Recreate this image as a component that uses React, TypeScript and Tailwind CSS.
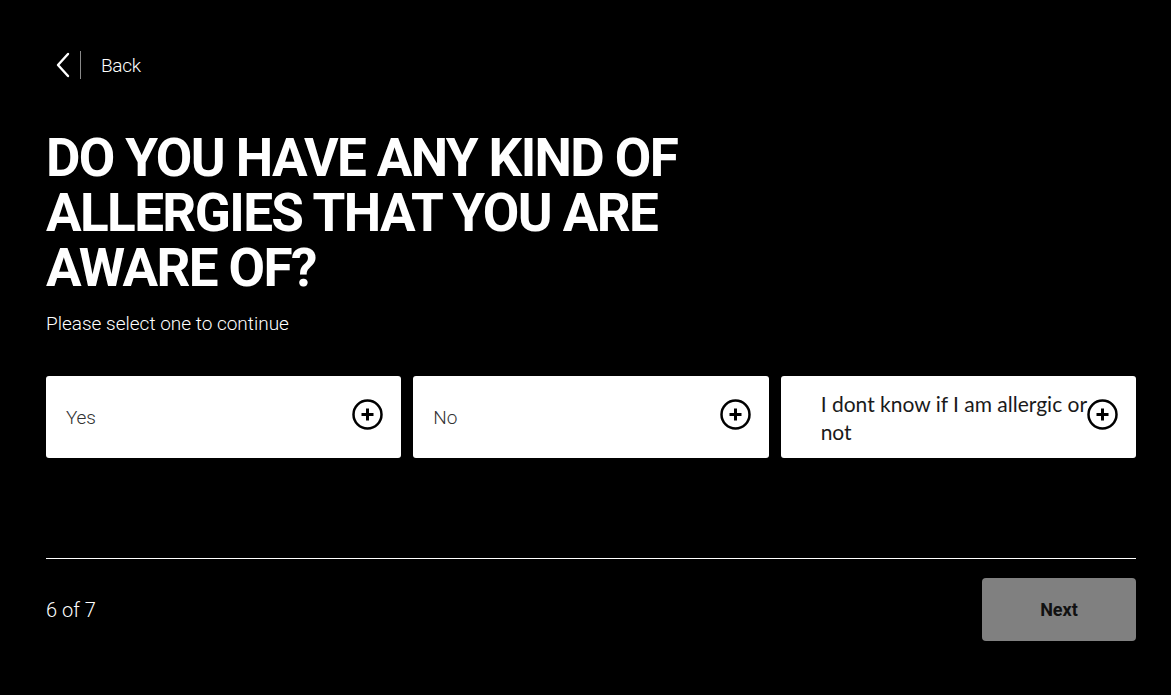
import React, { useState } from 'react';

const options = ['Yes', 'No', 'I dont know if I am allergic or not'];

const PlusCircle: React.FC<{ className?: string }> = ({ className }) => (
  <svg width="31" height="31" viewBox="0 0 31 31" fill="none" className={`shrink-0 ${className ?? ''}`}>
    <circle cx="15.5" cy="15.5" r="14" stroke="#000" strokeWidth="2.5" />
    <path d="M15.5 9.5v12M9.5 15.5h12" stroke="#000" strokeWidth="3" />
  </svg>
);

const App: React.FC = () => {
  const [selected, setSelected] = useState<number | null>(null);

  return (
    <div
      className="min-h-[695px] w-full bg-black text-white"
      style={{ fontFamily: 'Roboto, "Liberation Sans", sans-serif' }}
    >
      <div className="w-[1090px] ml-[46px] pt-[51px]">
        {/* Back */}
        <button className="flex items-center h-[28px] text-white">
          <span className="flex items-center justify-center w-[34px] h-[28px]">
            <svg width="16" height="26" viewBox="0 0 16 26" fill="none">
              <path d="M13 2 3 13l10 11" stroke="#fff" strokeWidth="2.4" strokeLinecap="round" strokeLinejoin="round" />
            </svg>
          </span>
          <span className="w-px h-[28px] bg-[#8a8a8a]" />
          <span className="ml-[20px] text-[19px] font-light leading-none tracking-[-0.3px]">Back</span>
        </button>

        {/* Question */}
        <h1 className="mt-[52px] w-[680px] text-[53px] leading-[55px] font-bold uppercase tracking-[-1.6px]">
          Do you have any kind of allergies that you are aware of?
        </h1>
        <p className="mt-[16px] text-[19px] font-light leading-[24px]">
          Please select one to continue
        </p>

        {/* Options */}
        <div className="mt-[40px] grid grid-cols-3 gap-[12px]">
          {options.map((opt, i) => (
            <button
              key={opt}
              onClick={() => setSelected(i)}
              className={`flex items-center justify-between h-[82px] rounded-[3px] bg-white text-left pr-[18px] ${
                i === 2 ? 'pl-[40px]' : 'pl-[20px]'
              } ${selected === i ? 'ring-2 ring-gray-400' : ''}`}
            >
              {i === 2 ? (
                <span
                  className="w-[272px] shrink-0 text-[21px] leading-[28px] text-[#1a1a1a] pt-[2px]"
                  style={{ fontFamily: 'Lato, "Open Sans", sans-serif' }}
                >
                  {opt}
                </span>
              ) : (
                <span className="text-[19px] font-light text-[#333] tracking-[-0.2px] pt-[2px]">{opt}</span>
              )}
              <PlusCircle className={i === 2 ? '-ml-[6px] -mt-[5px]' : '-mt-[5px]'} />
            </button>
          ))}
        </div>

        {/* Footer */}
        <div className="mt-[100px] border-t border-white" />
        <div className="flex items-center justify-between mt-[19px]">
          <span className="text-[20px] font-light">6 of 7</span>
          <button className="w-[154px] h-[63px] rounded-[4px] bg-[#808080] text-[18px] font-bold text-[#111]">
            Next
          </button>
        </div>
      </div>
    </div>
  );
};

export default App;
